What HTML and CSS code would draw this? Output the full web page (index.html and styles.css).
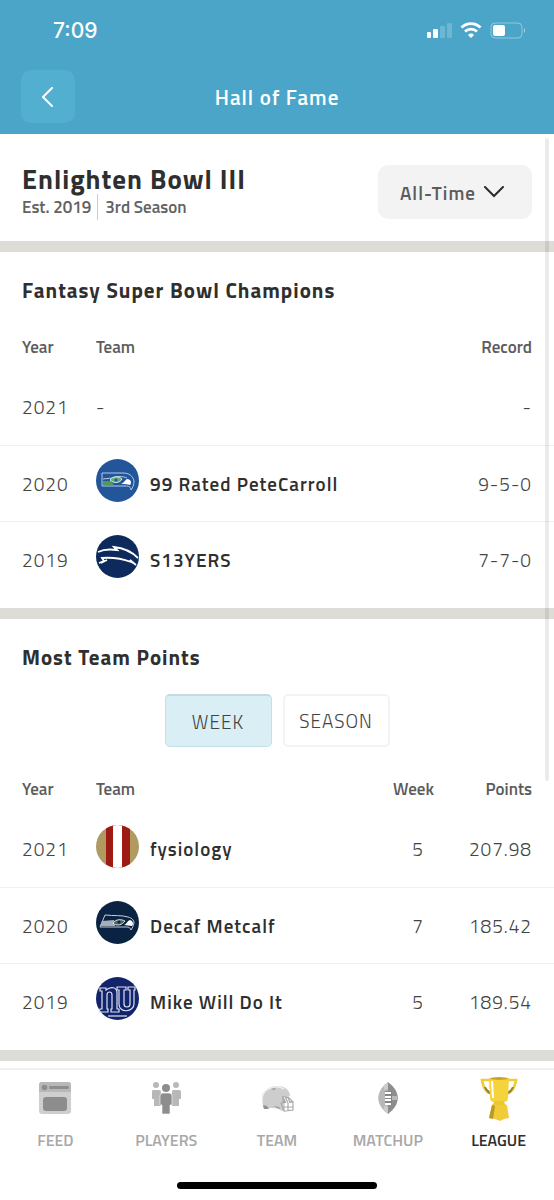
FILE: index.html
```html
<!DOCTYPE html>
<html lang="en">
<head>
    <meta charset="UTF-8">
    <meta name="viewport" content="width=device-width, initial-scale=1.0">
    <title>Hall of Fame</title>
    <link rel="stylesheet" href="styles.css">
</head>
<body>

<header>
    <div class="status-bar">
        <span class="time">7:09</span>
        <svg width="100" height="18" viewBox="0 0 100 18" aria-hidden="true">
            <g fill="#fff">
                <rect x="0" y="11" width="4" height="6" rx="1"/>
                <rect x="6" y="8" width="5" height="9" rx="1"/>
                <rect x="13" y="5" width="5" height="12" rx="1" opacity=".2"/>
                <rect x="20" y="2" width="5" height="15" rx="1" opacity=".2"/>
                <path d="M44 17l-3-3a4.3 4.3 0 0 1 6 0z"/>
            </g>
            <g fill="none" stroke="#fff" stroke-width="2.8">
                <path d="M34.500 6.500a13.500 13.500 0 0 1 19 0"/>
                <path d="M38 10.600a8.500 8.500 0 0 1 12 0"/>
            </g>
            <rect x="64" y="2" width="31" height="15" rx="4" fill="none" stroke="#fff" stroke-opacity=".4"/>
            <rect x="66" y="4" width="12" height="11" rx="2" fill="#fff"/>
            <path d="M97 7q2 2.500 0 5z" fill="#fff" opacity=".6"/>
        </svg>
    </div>
    <div class="title-bar">
        <button class="back" aria-label="Back">
            <svg width="14" height="20" viewBox="0 0 14 20"><path d="M11 1L2 10l9 9" fill="none" stroke="#fff" stroke-width="2" stroke-linecap="round" stroke-linejoin="round"/></svg>
        </button>
        <h1>Hall of Fame</h1>
    </div>
</header>

<main>
    <div class="scrollbar"></div>

    <section class="league">
        <div>
            <h2>Enlighten Bowl III</h2>
            <p><span>Est. 2019</span><span class="season">3rd Season</span></p>
        </div>
        <button class="filter">All-Time
            <svg width="20" height="12" viewBox="0 0 20 12"><path d="M1 1l9 9 9-9" fill="none" stroke="#2b2b2b" stroke-width="2" stroke-linecap="round"/></svg>
        </button>
    </section>

    <section class="champions">
        <h3>Fantasy Super Bowl Champions</h3>
        <table>
            <thead>
                <tr><th>Year</th><th>Team</th><th class="num">Record</th></tr>
            </thead>
            <tbody>
                <tr><td>2021</td><td>-</td><td class="num">-</td></tr>
                <tr>
                    <td>2020</td>
                    <td><div class="team">
                        <svg class="logo" viewBox="0 0 43 43">
                            <circle cx="21.500" cy="21.500" r="21.500" fill="#22559a"/>
                            <path d="M6 14h21c6 0 10 3 11 8 0 4-1 6-3 9 0-3-2-4-6-4H6z" fill="#22559a" stroke="#b9cbe2"/>
                            <path d="M7 22h8l3 4H7z" fill="#4d9b55"/>
                            <path d="M7 20l9-1c3-2 11-2 15 0" fill="none" stroke="#b9cbe2"/>
                            <path d="M14 21c3-4 9-4 12-1-2 4-8 5-12 1z" fill="#63ad74" stroke="#d8e6e8"/>
                            <circle cx="20" cy="21" r="1.500" fill="#22559a"/>
                            <path d="M25 25c3-1 4-4 6-5 4 0 5 4 3 6-2-1-5-1-9-1z" fill="#fff"/>
                        </svg>
                        99 Rated PeteCarroll
                    </div></td>
                    <td class="num">9-5-0</td>
                </tr>
                <tr>
                    <td>2019</td>
                    <td><div class="team">
                        <svg class="logo" viewBox="0 0 43 43">
                            <circle cx="21.500" cy="21.500" r="21.500" fill="#0e2a5c"/>
                            <g fill="none" stroke="#fff" stroke-width="1.800">
                                <path d="M2 17c6-3 12-3 19-2l-3-3c10 1 18 5 24 11"/>
                                <path d="M3 28l5-2-2-3c12-1 21 1 29 4l-1-2 6 5M5 28l6-3"/>
                            </g>
                        </svg>
                        S13YERS
                    </div></td>
                    <td class="num">7-7-0</td>
                </tr>
            </tbody>
        </table>
    </section>

    <section class="points">
        <h3>Most Team Points</h3>
        <div class="toggle">
            <button class="active">WEEK</button>
            <button>SEASON</button>
        </div>
        <table>
            <thead>
                <tr><th>Year</th><th>Team</th><th class="week">Week</th><th class="num">Points</th></tr>
            </thead>
            <tbody>
                <tr>
                    <td>2021</td>
                    <td><div class="team">
                        <svg class="logo" viewBox="0 0 43 43">
                            <clipPath id="round"><circle cx="21.500" cy="21.500" r="21.500"/></clipPath>
                            <g clip-path="url(#round)">
                                <path d="M0 0h43v43H0z" fill="#b09a62"/>
                                <path d="M10 0h24v43H10z" fill="#9e1b14"/>
                                <path d="M17 0h9v43h-9z" fill="#fff"/>
                            </g>
                        </svg>
                        fysiology
                    </div></td>
                    <td class="week">5</td>
                    <td class="num">207.98</td>
                </tr>
                <tr>
                    <td>2020</td>
                    <td><div class="team">
                        <svg class="logo" viewBox="0 0 43 43">
                            <circle cx="21.500" cy="21.500" r="21.500" fill="#0a2343"/>
                            <path d="M9 14c9 1 17 0 23 2 4 1 6 3 6 6-1 3-1 4-3 7-1-3-3-3-6-3H4z" fill="#0a2343" stroke="#c6ced6"/>
                            <path d="M6 20l12-1 1 6H4z" fill="#a5afb8"/>
                            <path d="M17 22c3-4 8-4 12-2-3 4-7 5-11 3z" fill="#52645f" stroke="#dce2e5"/>
                            <circle cx="23" cy="21" r="1.500" fill="#0a2343"/>
                            <path d="M28 24c3-1 3-4 6-5 3 1 4 4 2 6z" fill="#fff"/>
                        </svg>
                        Decaf Metcalf
                    </div></td>
                    <td class="week">7</td>
                    <td class="num">185.42</td>
                </tr>
                <tr>
                    <td>2019</td>
                    <td><div class="team">
                        <svg class="logo" viewBox="0 0 43 43">
                            <circle cx="21.500" cy="21.500" r="21.500" fill="#12246b"/>
                            <g fill="none" stroke="#dfe3f2" stroke-width="1.200">
                                <path d="M4 11h6v2c5-4 11-3 11 3v16h2v3h-8v-3h1V18c0-4-5-4-5 0v14h1v3H3l1-3h2V14H4z"/>
                                <path d="M21 10h9v3h-2v14c0 4 6 4 6 0V13h-2v-3h7v3h-1v14c0 8-15 10-15 0V13h-2z"/>
                                <path d="M12 39h19"/>
                            </g>
                        </svg>
                        Mike Will Do It
                    </div></td>
                    <td class="week">5</td>
                    <td class="num">189.54</td>
                </tr>
            </tbody>
        </table>
    </section>
</main>

<footer>
    <nav>
        <a href="#feed">
            <svg width="48" height="48" viewBox="0 0 48 48">
                <rect x="8" y="8" width="32" height="32" rx="3" fill="#cfcfcf"/>
                <path d="M8 18v-7a3 3 0 0 1 3-3h26a3 3 0 0 1 3 3v7z" fill="#b8b8b8"/>
                <circle cx="13.500" cy="13.500" r="2.800" fill="#8d8d8d"/>
                <rect x="18" y="12" width="20" height="3" rx="1.500" fill="#8d8d8d"/>
                <rect x="12" y="23" width="24" height="14" rx="3" fill="#8d8d8d"/>
            </svg>
            FEED
        </a>
        <a href="#players">
            <svg width="48" height="48" viewBox="0 0 48 48">
                <g fill="#b8b8b8">
                    <circle cx="14" cy="11" r="3"/><circle cx="34" cy="11" r="3"/>
                    <path d="M11 16h6q2 0 2 2v14h-7v-7h-2v-7q0-2 1-2zM31 16h6q2 0 2 2v7h-2v7h-7V18q0-2 1-2z"/>
                </g>
                <circle cx="24" cy="14" r="4" fill="#8d8d8d"/>
                <path d="M21 19h6q3 0 3 3v9h-2v9h-8v-9h-2v-9q0-3 3-3z" fill="#8d8d8d" stroke="#fff" stroke-width=".6"/>
            </svg>
            PLAYERS
        </a>
        <a href="#team">
            <svg width="48" height="48" viewBox="0 0 48 48">
                <path d="M11 35c-4-11 0-23 13-23 9 0 13 5 13 10l-6 2 1 12-3 1c-4-3-10-4-18-2z" fill="#cdcdcd"/>
                <path d="M9 23c2-9 14-13 22-8" fill="none" stroke="#eee" stroke-width="1.500"/>
                <path d="M10 31l4 1 2 3h-5zM18 15l5-1-2 2zM20 32l6 1 1 2z" fill="#929292"/>
                <path d="M29 22l6 1 3 6h-8z" fill="#a5a5a5"/>
                <path d="M28 29l12-1v8l-9 1zM35 23l5 5M30 33h10M35 29v8" fill="none" stroke="#aaa" stroke-width="1.200"/>
                <path d="M31 23l3 6M34 24l2 5" stroke="#fff"/>
            </svg>
            TEAM
        </a>
        <a href="#matchup">
            <svg width="48" height="48" viewBox="0 0 48 48">
                <path d="M24 8C11 18 11 30 24 40z" fill="#b8b8b8"/>
                <path d="M24 8c13 10 13 22 0 32z" fill="#8d8d8d"/>
                <path d="M20 11l4-3v7l-4 1zM20 37l4 3v-7l-4-1z" fill="#ccc"/>
                <path d="M28 22h5v4h-5z" fill="#b8b8b8"/>
                <rect x="21" y="17" width="7" height="14" fill="#858585"/>
                <path d="M21 19h6M21 23h6M21 26h6M21 30h6" stroke="#fff" stroke-width="1.800"/>
            </svg>
            MATCHUP
        </a>
        <a href="#league" class="current">
            <svg width="48" height="48" viewBox="0 0 48 48">
                <path d="M15 6H7c1 7 4 13 11 14M33 6h8c-1 7-4 13-11 14" fill="none" stroke="#f0cd38" stroke-width="2.600"/>
                <path d="M9 13q2 7 9 8l-1-3q-4-1-6-5zM39 13q-2 7-9 8l1-3q4-1 6-5z" fill="#97883b"/>
                <path d="M14 4h20l-1 20c0 3-2 4-4 4H19c-2 0-4-1-4-4z" fill="#f5d33c"/>
                <ellipse cx="24" cy="4.500" rx="9" ry="1.500" fill="#c9a52c"/>
                <path d="M17 7l1 17" fill="none" stroke="#fff" stroke-width="2"/>
                <path d="M20 27h8l3 4H17z" fill="#edc72f"/>
                <path d="M17 31h15l2 13-5 1-4 2-5-2-6-1z" fill="#f0cd38"/>
                <path d="M17 31l3 1-2 13-4-1z" fill="#b89a2c"/>
            </svg>
            LEAGUE
        </a>
    </nav>
    <div class="home-bar"></div>
</footer>

</body>
</html>
```

FILE: styles.css
```css
* {
    box-sizing: border-box;
}
body {
    margin: 0;
    min-height: 100vh;
    display: flex;
    flex-direction: column;
    background-color: #fff;
    color: #2f2f2f;
    font-family: "Titillium Web", Roboto, sans-serif;
    letter-spacing: 1px;
}
h1, h2, h3, p {
    margin: 0;
}
button {
    font-family: inherit;
    letter-spacing: inherit;
    cursor: pointer;
    border: none;
}
header {
    background-color: #4aa5c8;
    color: #fff;
    padding: 16px 21px 11px;
}
.status-bar {
    display: flex;
    justify-content: space-between;
    align-items: center;
    height: 28px;
    padding: 0 6px 0 32px;
}
.time {
    font-family: Inter, sans-serif;
    font-size: 21px;
    font-weight: 500;
    letter-spacing: 0;
}
.title-bar {
    display: grid;
    grid-template-columns: 54px 1fr 54px;
    align-items: center;
    margin-top: 26px;
}
.title-bar h1 {
    font-size: 21px;
    font-weight: 600;
    text-align: center;
}
.back {
    height: 53px;
    display: flex;
    justify-content: center;
    align-items: center;
    background-color: #52afcf;
    border-radius: 10px;
}
main {
    position: relative;
    flex: 1;
}
/* floats over the content on the right edge */
.scrollbar {
    position: absolute;
    top: 4px;
    right: 5px;
    width: 4px;
    height: 643px;
    border-radius: 2px;
    background-color: rgba(0, 0, 0, 0.08);
}
section {
    border-bottom: 11px solid #dddcd6;
}
.league {
    display: flex;
    justify-content: space-between;
    align-items: center;
    padding: 30px 22px 21px;
}
.league h2 {
    font-size: 27px;
    line-height: 30px;
}
.league p {
    font-size: 17px;
    font-weight: 600;
    line-height: 26px;
    letter-spacing: 0;
    color: #626262;
}
.season {
    margin-left: 6px;
    padding-left: 7px;
    border-left: 1px solid #ccc;
}
.filter {
    display: flex;
    align-items: center;
    gap: 8px;
    height: 54px;
    padding: 0 28px 0 22px;
    background-color: #f3f3f3;
    border-radius: 10px;
    color: #5c5c5c;
    font-size: 19px;
    font-weight: 600;
}
h3 {
    padding: 25px 22px 0;
    font-size: 21px;
    line-height: 26px;
}
table {
    width: 100%;
    border-collapse: collapse;
}
th {
    height: 64px;
    padding: 20px 0 0;
    font-size: 17px;
    font-weight: 600;
    letter-spacing: 0;
    text-align: left;
    color: #5c5c5c;
}
td {
    height: 76px;
    padding: 0;
    font-size: 19px;
    font-weight: 300;
    color: #444;
}
tbody tr + tr {
    border-top: 1px solid #f0f0f0;
}
th:first-child, td:first-child {
    width: 96px;
    padding-left: 22px;
}
.num {
    width: 111px;
    padding-right: 22px;
    text-align: right;
}
.week {
    width: 50px;
}
td.week {
    text-align: center;
}
.champions, .points {
    padding-bottom: 11px;
}
.champions th {
    height: 66px;
    padding-top: 22px;
}
.team {
    display: flex;
    align-items: center;
    gap: 11px;
    color: #2f2f2f;
    font-weight: 600;
}
.logo {
    width: 43px;
    height: 43px;
    margin-bottom: 5px;
}
.toggle {
    display: flex;
    justify-content: center;
    gap: 11px;
    margin-top: 24px;
}
.toggle button {
    width: 107px;
    height: 53px;
    padding: 0;
    border: 2px solid #f3f3f3;
    border-radius: 5px;
    background-color: #fff;
    color: #444;
    font-size: 19px;
    font-weight: 300;
}
.toggle .active {
    border: 1px solid #c5dfe8;
    border-top: 2px solid #c5d9e0;
    background-color: #daeef6;
}
footer {
    border-top: 2px solid #f0f0f0;
    background-color: #fff;
}
nav {
    display: grid;
    grid-template-columns: repeat(5, 1fr);
    padding-top: 4px;
}
nav a {
    display: flex;
    flex-direction: column;
    align-items: center;
    gap: 7px;
    color: #a8a8a8;
    font-size: 16px;
    font-weight: 600;
    line-height: 22px;
    letter-spacing: 0;
    text-decoration: none;
}
nav .current {
    color: #2f2f2f;
}
.home-bar {
    width: 36%;
    height: 7px;
    margin: 31px auto 11px;
    border-radius: 4px;
    background-color: #000;
}
```
